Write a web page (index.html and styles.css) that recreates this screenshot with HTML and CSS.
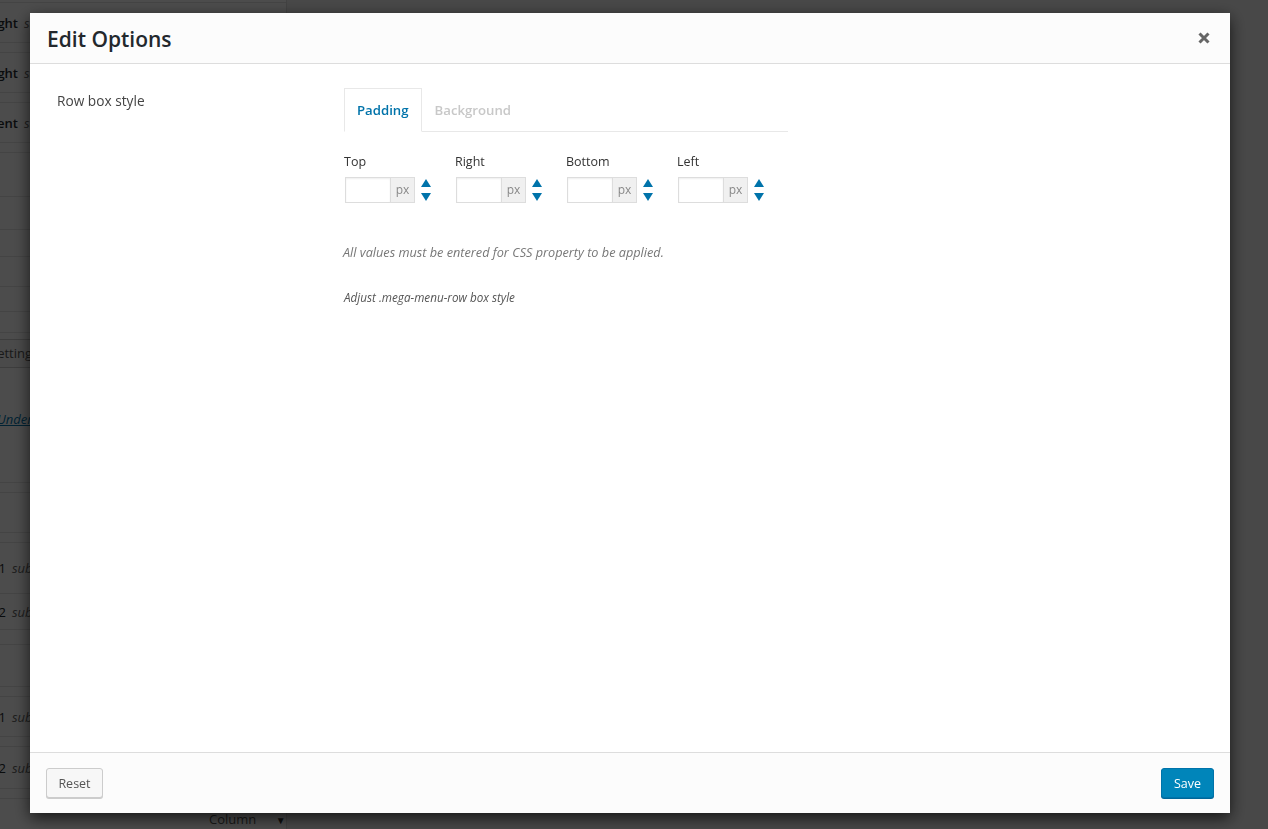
FILE: index.html
```html
<!DOCTYPE html>
<html lang="en">
<head>
<meta charset="utf-8">
<title>Edit Options</title>
<link rel="stylesheet" href="styles.css">
</head>
<body>
<div class="admin">
  <div class="panel">
    <div class="prow lead"></div>
    <div class="prow item"><span class="ttl">Right</span><span class="sub">sub item</span></div>
    <div class="prow sep"></div>
    <div class="prow item"><span class="ttl">Right</span><span class="sub">sub item</span></div>
    <div class="prow sep"></div>
    <div class="prow item"><span class="ttl">Content</span><span class="sub">sub item</span></div>
    <div class="prow sep"></div>
    <div class="prow h44"></div>
    <div class="prow h33"></div>
    <div class="prow h27"></div>
    <div class="prow h30"></div>
    <div class="prow h25"></div>
    <div class="prow h21"></div>
    <div class="prow settings-row"><span class="settings-btn">Settings</span></div>
    <div class="prow link-row"><a class="under">Under</a></div>
    <div class="prow sep"></div>
    <div class="prow h40"></div>
    <div class="prow sep"></div>
    <div class="prow h51 num"><span class="ttl2">Column 1</span><span class="sub">sub item</span></div>
    <div class="prow h36 num"><span class="ttl2">Column 2</span><span class="sub">sub item</span></div>
    <div class="prow h15"></div>
    <div class="prow h42"></div>
    <div class="prow sep"></div>
    <div class="prow item num"><span class="ttl2">Column 1</span><span class="sub">sub item</span></div>
    <div class="prow sep"></div>
    <div class="prow h42 num"><span class="ttl2">Column 2</span><span class="sub">sub item</span></div>
    <div class="prow sep"></div>
    <div class="prow select-row"><span class="select">Column <span class="caret">&#9660;</span></span></div>
  </div>
</div>

<div class="overlay"></div>

<div class="modal">
  <div class="modal-header">
    <h1 class="modal-title">Edit Options</h1>
    <button class="close" aria-label="Close">
      <svg width="12" height="12" viewBox="0 0 12 12"><path d="M1.5 1.5 L10.5 10.5 M10.5 1.5 L1.5 10.5" stroke="#666" stroke-width="3" stroke-linecap="butt"/></svg>
    </button>
  </div>

  <div class="modal-body">
    <div class="opt-label">Row box style</div>
    <div class="opt-field">
      <div class="tabs">
        <div class="tab active">Padding</div>
        <div class="tab">Background</div>
      </div>

      <div class="fields">
        <div class="field">
          <div class="flabel">Top</div>
          <div class="ctrl">
            <div class="inp"><span class="box"></span><span class="unit">px</span></div>
            <div class="spin">
              <svg width="10" height="8" viewBox="0 0 10 8"><path d="M5 0 L10 8 L0 8 Z" fill="#0073aa"/></svg>
              <svg width="10" height="8" viewBox="0 0 10 8"><path d="M0 0 L10 0 L5 8 Z" fill="#0073aa"/></svg>
            </div>
          </div>
        </div>
        <div class="field">
          <div class="flabel">Right</div>
          <div class="ctrl">
            <div class="inp"><span class="box"></span><span class="unit">px</span></div>
            <div class="spin">
              <svg width="10" height="8" viewBox="0 0 10 8"><path d="M5 0 L10 8 L0 8 Z" fill="#0073aa"/></svg>
              <svg width="10" height="8" viewBox="0 0 10 8"><path d="M0 0 L10 0 L5 8 Z" fill="#0073aa"/></svg>
            </div>
          </div>
        </div>
        <div class="field">
          <div class="flabel">Bottom</div>
          <div class="ctrl">
            <div class="inp"><span class="box"></span><span class="unit">px</span></div>
            <div class="spin">
              <svg width="10" height="8" viewBox="0 0 10 8"><path d="M5 0 L10 8 L0 8 Z" fill="#0073aa"/></svg>
              <svg width="10" height="8" viewBox="0 0 10 8"><path d="M0 0 L10 0 L5 8 Z" fill="#0073aa"/></svg>
            </div>
          </div>
        </div>
        <div class="field">
          <div class="flabel">Left</div>
          <div class="ctrl">
            <div class="inp"><span class="box"></span><span class="unit">px</span></div>
            <div class="spin">
              <svg width="10" height="8" viewBox="0 0 10 8"><path d="M5 0 L10 8 L0 8 Z" fill="#0073aa"/></svg>
              <svg width="10" height="8" viewBox="0 0 10 8"><path d="M0 0 L10 0 L5 8 Z" fill="#0073aa"/></svg>
            </div>
          </div>
        </div>
      </div>

      <p class="note">All values must be entered for CSS property to be applied.</p>
      <p class="desc">Adjust .mega-menu-row box style</p>
    </div>
  </div>

  <div class="modal-footer">
    <button class="btn reset">Reset</button>
    <button class="btn save">Save</button>
  </div>
</div>
</body>
</html>
```

FILE: styles.css
```css
* { box-sizing: border-box; }

html, body {
  margin: 0;
  padding: 0;
  height: 100%;
}

body {
  background: #f1f1f1;
  font-family: "Open Sans", "Noto Sans", sans-serif;
  color: #444;
  overflow: hidden;
}

/* ---------- background admin page ---------- */
.admin {
  height: 829px;
}

.panel {
  width: 287px;
  height: 829px;
  background: #fff;
  border-right: 1px solid #ddd;
  overflow: hidden;
  font-size: 13px;
}

.prow {
  border-bottom: 1px solid #e5e5e5;
  display: flex;
  align-items: center;
  white-space: nowrap;
  overflow: hidden;
}

.lead { height: 3px; }
.item { height: 40px; }
.sep { height: 10px; }
.h15 { height: 15px; }
.h21 { height: 21px; }
.h25 { height: 25px; }
.h27 { height: 27px; }
.h30 { height: 30px; }
.h33 { height: 33px; }
.h36 { height: 36px; }
.h40 { height: 40px; }
.h42 { height: 42px; }
.h44 { height: 44px; }
.h51 { height: 51px; }

.ttl {
  display: inline-block;
  width: 70px;
  margin-left: -52px;
  text-align: right;
  font-weight: 600;
  color: #23282d;
}

.ttl2 {
  display: inline-block;
  width: 70px;
  margin-left: -64px;
  text-align: right;
  color: #23282d;
}

.sub {
  margin-left: 6px;
  font-style: italic;
  color: #666;
}

.settings-row {
  height: 35px;
  align-items: flex-end;
  border-bottom: none;
}

.settings-btn {
  display: inline-block;
  margin-left: -21px;
  height: 29px;
  line-height: 27px;
  padding: 0 10px;
  border: 1px solid #ccc;
  background: #f7f7f7;
  color: #555;
}

.link-row {
  height: 115px;
  align-items: flex-start;
  padding-top: 42px;
}

.under {
  margin-left: -3px;
  font-style: italic;
  text-decoration: underline;
  color: #0073aa;
}

.select-row {
  height: 40px;
  border-bottom: none;
  align-items: flex-start;
  padding-top: 11px;
}

.select {
  margin-left: 200px;
  width: 84px;
  color: #555;
  padding-left: 9px;
}

.caret {
  font-size: 10px;
  margin-left: 16px;
  color: #333;
}

/* ---------- overlay ---------- */
.overlay {
  position: fixed;
  inset: 0;
  background: rgba(0, 0, 0, 0.7);
}

/* ---------- modal ---------- */
.modal {
  position: fixed;
  top: 13px;
  left: 30px;
  width: 1200px;
  height: 800px;
  background: #fff;
  box-shadow: 0 5px 15px rgba(0, 0, 0, 0.7);
  display: flex;
  flex-direction: column;
}

.modal-header {
  height: 51px;
  flex: none;
  background: #fcfcfc;
  border-bottom: 1px solid #ddd;
  display: flex;
  align-items: center;
  justify-content: space-between;
  padding: 0 20px 0 17px;
}

.modal-title {
  margin: 0;
  font-size: 21px;
  font-weight: 600;
  color: #23282d;
  line-height: 28px;
  padding-top: 1px;
}

.close {
  border: 0;
  background: transparent;
  padding: 0;
  width: 12px;
  height: 12px;
  display: flex;
  cursor: pointer;
}

.modal-body {
  flex: 1;
  display: grid;
  grid-template-columns: 287px 1fr;
  padding: 24px 27px 0;
  align-content: start;
}

.opt-label {
  padding-top: 3px;
  font-size: 13.7px;
  line-height: 20px;
  color: #444;
}

.tabs {
  display: flex;
  width: 444px;
  height: 44px;
  border-bottom: 1px solid #e8e8e8;
}

.tab {
  height: 44px;
  line-height: 42px;
  padding: 0 12px;
  border: 1px solid transparent;
  font-size: 13.2px;
  font-weight: 600;
  color: #c8c8c8;
}

.tab.active {
  border-color: #e8e8e8;
  border-bottom-color: #fff;
  background: #fff;
  color: #0073aa;
}

.fields {
  display: flex;
  margin-top: 21px;
}

.field {
  width: 111px;
}

.flabel {
  font-size: 12.5px;
  line-height: 18px;
  color: #333;
  margin-bottom: 6px;
}

.ctrl {
  display: flex;
  align-items: center;
  gap: 6px;
}

.inp {
  display: flex;
  height: 26px;
  margin-left: 1px;
}

.box {
  width: 45px;
  height: 26px;
  border: 1px solid #ddd;
  border-right: 0;
  background: #fff;
  box-shadow: inset 0 1px 2px rgba(0, 0, 0, 0.07);
}

.unit {
  width: 25px;
  height: 26px;
  border: 1px solid #ddd;
  background: #f0f0f0;
  color: #888;
  font-size: 12px;
  line-height: 24px;
  text-align: center;
}

.spin {
  display: flex;
  flex-direction: column;
  gap: 6px;
}

.spin svg { display: block; }

.note {
  margin: 40px 0 0 -1px;
  font-size: 12.7px;
  line-height: 18px;
  font-style: italic;
  color: #777;
}

.desc {
  margin: 27px 0 0;
  font-size: 11.7px;
  line-height: 18px;
  font-style: italic;
  color: #555;
}

.modal-footer {
  height: 61px;
  flex: none;
  background: #fcfcfc;
  border-top: 1px solid #ddd;
  display: flex;
  justify-content: space-between;
  align-items: flex-start;
  padding: 15px 16px 0;
}

.btn {
  font-family: "Open Sans", "Noto Sans", sans-serif;
  font-size: 12.5px;
  height: 30px;
  line-height: 28px;
  padding: 1px 0 0;
  border-radius: 3px;
  cursor: pointer;
}

.reset {
  background: #f7f7f7;
  border: 1px solid #ccc;
  color: #555;
  box-shadow: 0 1px 0 #ccc;
  width: 57px;
}

.save {
  background: #0085ba;
  border: 1px solid #0073aa;
  color: #fff;
  box-shadow: 0 1px 0 #006799;
  width: 53px;
}
```
